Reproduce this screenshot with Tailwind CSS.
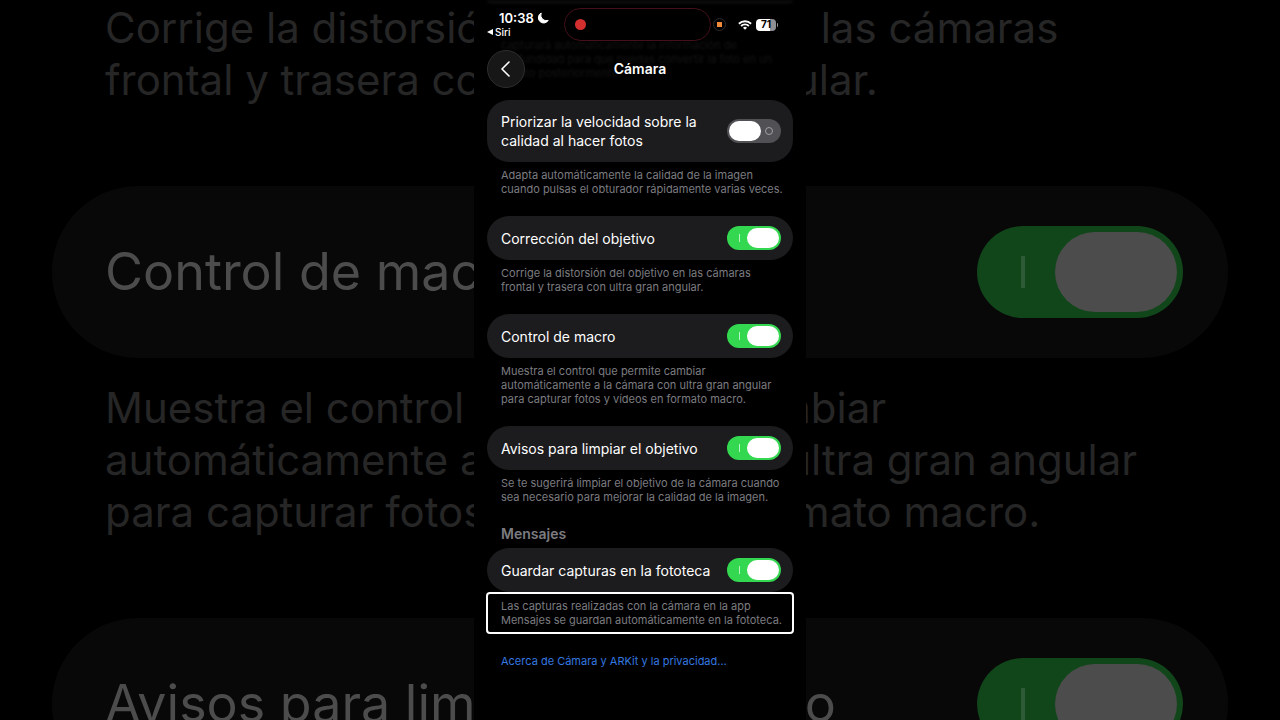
<!DOCTYPE html>
<html lang="es">

<head>
    <meta charset="UTF-8">
    <meta name="viewport" content="width=device-width, initial-scale=1.0">
    <title>Ajustes - Cámara</title>
    <script src="https://cdn.jsdelivr.net/npm/@tailwindcss/browser@4"></script>
</head>

<body class="relative min-h-screen overflow-hidden bg-black font-[Inter,'Liberation_Sans',sans-serif] text-white">

    <!-- Enlarged, dimmed backdrop -->
    <div class="absolute inset-0 overflow-hidden px-[52px] pt-0.5 whitespace-nowrap" aria-hidden="true">
        <p class="px-[53px] text-[42px] leading-[52px] text-[#262626]">Corrige la distorsión del objetivo en las cámaras<br>frontal y trasera con ultra gran angular.</p>
        <div class="mt-20 flex h-[172px] items-center justify-between rounded-[86px] bg-[#080808] pr-[45px] pl-[53px]">
            <span class="text-[52px] text-[#4c4c4c]">Control de macro</span>
            <span class="flex h-[92px] w-[206px] items-center justify-between rounded-full bg-[#11461a] pr-[6px] pl-11">
                <span class="h-8 w-1 bg-[#2f5a36]"></span>
                <span class="h-20 w-[122px] rounded-full bg-[#4c4c4c]"></span>
            </span>
        </div>
        <p class="mt-6 px-[53px] text-[42px] leading-[52px] text-[#262626]">Muestra el control que permite cambiar<br>automáticamente a la cámara con ultra gran angular<br>para capturar fotos y vídeos en formato macro.</p>
        <div class="mt-20 flex h-[172px] items-center justify-between rounded-[86px] bg-[#080808] pr-[45px] pl-[53px]">
            <span class="text-[52px] text-[#4c4c4c]">Avisos para limpiar el objetivo</span>
            <span class="flex h-[92px] w-[206px] items-center justify-between rounded-full bg-[#11461a] pr-[6px] pl-11">
                <span class="h-8 w-1 bg-[#2f5a36]"></span>
                <span class="h-20 w-[122px] rounded-full bg-[#4c4c4c]"></span>
            </span>
        </div>
    </div>

    <!-- Phone -->
    <div class="relative mx-auto min-h-screen w-full max-w-[332px] bg-black px-[13px]">

        <!-- Text scrolled under the header -->
        <div class="absolute inset-x-[13px] top-0 text-[11px] leading-[14px] text-[#141414] blur-[1px]" aria-hidden="true">
            <div class="h-1 rounded-b-full bg-[#0a0a0b]"></div>
            <p class="mt-[34px] px-[14px] whitespace-nowrap">capturará automáticamente la información de<br>profundidad para que puedas convertir la foto en un<br>retrato posteriormente.</p>
        </div>

        <!-- Status bar -->
        <div class="relative flex h-[50px] pt-2">
            <div class="w-[77px]">
                <div class="flex items-center gap-[3px] pt-px pl-3 text-[13px] leading-[18px] font-semibold">
                    <span>10:38</span>
                    <svg class="size-3" viewBox="0 0 12 12" fill="currentColor"><path d="M4.2 1A5.3 5.3 0 1 0 11.2 8.4 5.6 5.6 0 0 1 4.2 1z" stroke="currentColor" stroke-width="1" stroke-linejoin="round" /></svg>
                </div>
                <div class="flex items-center gap-[2px] text-[10px] leading-[10px] font-medium">
                    <svg class="size-[6px]" viewBox="0 0 6 6" fill="currentColor"><path d="M6 0v6L0 3z" /></svg>
                    <span>Siri</span>
                </div>
            </div>
            <div class="flex h-[33px] w-[147px] items-center rounded-full border border-[#45101a] bg-black pl-[10px]">
                <span class="size-[11px] rounded-full bg-[#d32f2f]"></span>
            </div>
            <div class="flex h-[33px] items-center pl-[2px]">
                <span class="flex size-[13px] items-center justify-center rounded-full border border-[#2c2c2e]">
                    <span class="size-[5px] bg-[#f08a3a]"></span>
                </span>
                <svg class="ml-3 h-[10px] w-[14px]" viewBox="0 0 14 10" fill="none" stroke="currentColor" stroke-width="1.9"><path d="M.9 3.7a8.8 8.8 0 0 1 12.2 0M3.1 6a5.6 5.6 0 0 1 7.8 0" /><path d="M7 9.8 5 7.7a2.9 2.9 0 0 1 4 0z" fill="currentColor" stroke="none" /></svg>
                <span class="ml-1 flex h-3 w-5 items-center justify-center rounded-[4px] bg-linear-to-r from-white from-71% to-[#8e8e93] to-71% text-[10px] font-bold text-black">71</span>
                <span class="ml-px h-1 w-px rounded-r-full bg-[#8e8e93]"></span>
            </div>
        </div>

        <header class="relative flex h-[38px] items-center justify-center">
            <button class="absolute left-0 flex size-[38px] items-center justify-center rounded-full border border-[#2e2e2e] bg-[#171717]" aria-label="Atrás">
                <svg class="h-4 w-[10px]" viewBox="0 0 10 16" fill="none" stroke="currentColor" stroke-width="1.6" stroke-linecap="round" stroke-linejoin="round"><path d="M8 1 1 8l7 7" /></svg>
            </button>
            <h1 class="pb-0.5 text-[14px] font-semibold">Cámara</h1>
        </header>

        <main id="settings" class="relative pt-3"></main>
        <a href="#" class="relative mt-5 ml-[14px] block w-fit text-[11px] leading-[14px] text-[#3478e0]">Acerca de Cámara y ARKit y la privacidad…</a>
    </div>

    <script>
        const settings = [
            { id: 'velocidad', label: 'Priorizar la velocidad sobre la<br>calidad al hacer fotos', on: false, note: 'Adapta automáticamente la calidad de la imagen<br>cuando pulsas el obturador rápidamente varias veces.' },
            { id: 'objetivo', label: 'Corrección del objetivo', on: true, note: 'Corrige la distorsión del objetivo en las cámaras<br>frontal y trasera con ultra gran angular.' },
            { id: 'macro', label: 'Control de macro', on: true, note: 'Muestra el control que permite cambiar<br>automáticamente a la cámara con ultra gran angular<br>para capturar fotos y vídeos en formato macro.' },
            { id: 'limpiar', label: 'Avisos para limpiar el objetivo', on: true, note: 'Se te sugerirá limpiar el objetivo de la cámara cuando<br>sea necesario para mejorar la calidad de la imagen.' },
            { id: 'guardar', title: 'Mensajes', label: 'Guardar capturas en la fototeca', on: true, focused: true, note: 'Las capturas realizadas con la cámara en la app<br>Mensajes se guardan automáticamente en la fototeca.' }
        ];

        function renderSettings() {
            const list = document.getElementById('settings');
            settings.forEach(s => {
                const item = document.createElement('section');
                item.className = 'mb-[13px] whitespace-nowrap';
                item.innerHTML = `
                    ${s.title ? `<h2 class="px-[14px] pb-1 text-[14px] leading-5 font-semibold text-[#7c7c80]">${s.title}</h2>` : ''}
                    <div class="flex min-h-11 items-center justify-between rounded-[22px] bg-[#1c1c1e] py-3 pr-3 pl-[14px]">
                        <label for="${s.id}" class="text-[14px] leading-[19px]">${s.label}</label>
                        <input id="${s.id}" type="checkbox" role="switch" ${s.on ? 'checked' : ''}
                            class="relative -my-3 h-6 w-[54px] shrink-0 appearance-none rounded-full bg-[#515155] checked:bg-[#34d850]
                            before:absolute before:top-[2px] before:left-[2px] before:h-5 before:w-8 before:rounded-full before:bg-white checked:before:left-5
                            after:absolute after:top-2 after:right-2 after:size-2 after:rounded-full after:border after:border-[#a0a0a4]
                            checked:after:right-auto checked:after:left-3 checked:after:w-px checked:after:rounded-none checked:after:border-0 checked:after:bg-[#b5f2bf]">
                    </div>
                    <p class="${s.focused ? '-mx-px rounded-[4px] border-2 border-white bg-black px-[13px] py-[5px]' : 'px-[14px] pt-[6px] pb-[7px]'} text-[11px] leading-[14px] text-[#7c7c80]">${s.note}</p>
                `;
                list.appendChild(item);
            });
        }

        renderSettings();
    </script>
</body>

</html>
